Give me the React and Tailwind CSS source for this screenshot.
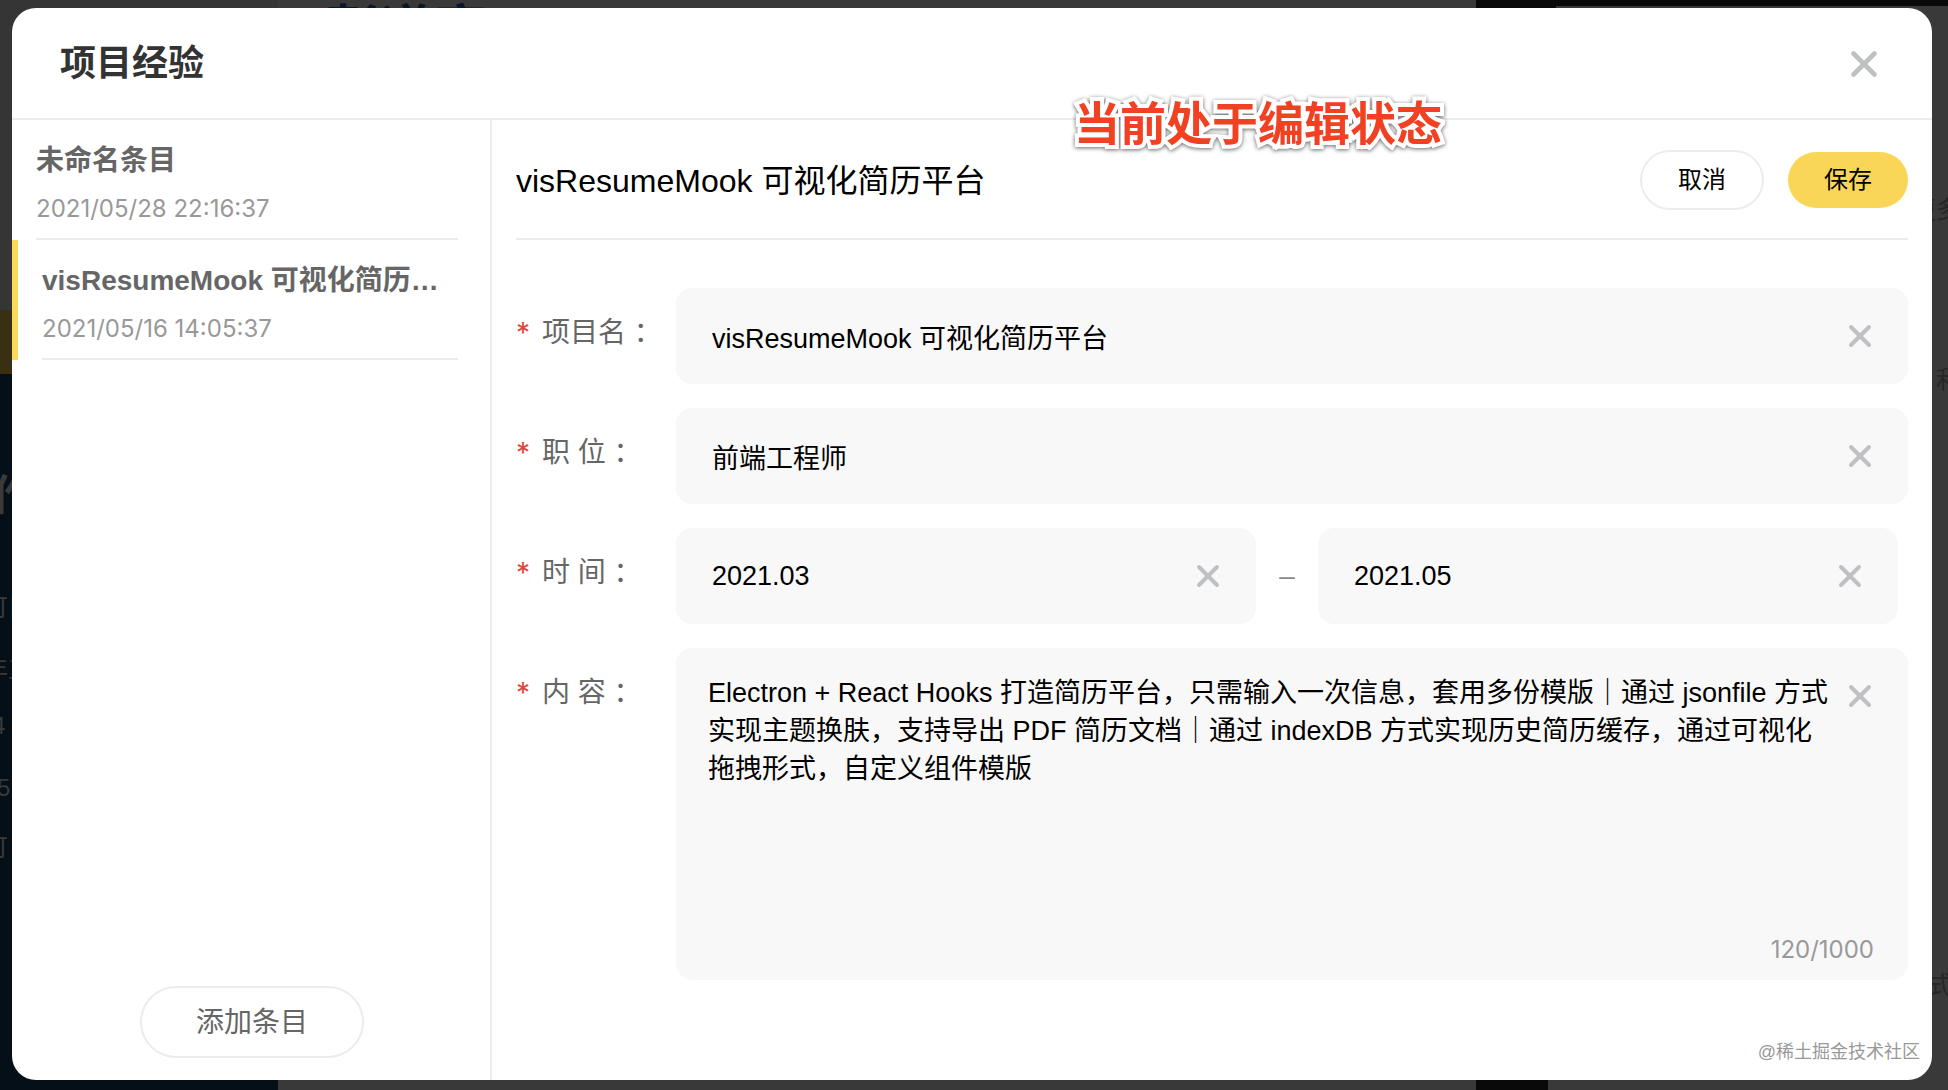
import React, { useState } from "react";

const FONT = "font-['Liberation_Sans','Noto_Sans_CJK_SC',sans-serif]";

function Cross({ className }) {
  return (
    <svg viewBox="0 0 24 24" className={className} fill="none" stroke="#bfc0c4" strokeLinecap="round" strokeWidth="4" aria-hidden="true">
      <path d="M3 3 21 21M21 3 3 21" />
    </svg>
  );
}

function Field({ id, value, label }) {
  const [text, setText] = useState(value);
  return (
    <div className="flex h-24 min-w-0 flex-1 items-center rounded-2xl bg-[#f8f8f8] px-9">
      <input id={id} aria-label={label} value={text} onChange={(e) => setText(e.target.value)} className="h-12 min-w-0 flex-1 bg-transparent text-[27px] text-black outline-none" />
      <button type="button" aria-label="清空" onClick={() => setText("")}>
        <Cross className="size-6" />
      </button>
    </div>
  );
}

function Row({ id, label, children }) {
  return (
    <div className="flex items-start">
      <label htmlFor={id} className="flex h-[90px] w-40 shrink-0 items-center gap-3 text-[28px] whitespace-pre text-[#666]">
        <span className="font-['Inter',sans-serif] text-[#e0483e]">*</span>
        <span>{label}</span>
      </label>
      {children}
    </div>
  );
}

function Entry({ title, time, active }) {
  return (
    <li className={active ? "border-l-6 border-[#fbd858]" : ""}>
      <button type="button" className={`ml-6 flex h-30 flex-col justify-center gap-2 border-b-2 border-[#ececec] pt-3 text-left ${active ? "w-[416px]" : "w-[422px]"}`}>
        <span className="block w-full truncate text-[28px] leading-10 font-bold text-[#666]">{title}</span>
        <span className="block font-['Inter',sans-serif] text-2xl leading-10 text-[#999]">{time}</span>
      </button>
    </li>
  );
}

const CONTENT =
  "Electron + React Hooks 打造简历平台，只需输入一次信息，套用多份模版｜通过 jsonfile 方式实现主题换肤，支持导出 PDF 简历文档｜通过 indexDB 方式实现历史简历缓存，通过可视化拖拽形式，自定义组件模版";

function Backdrop() {
  return (
    <div className="absolute inset-0 overflow-hidden bg-[#393939] text-2xl leading-10 whitespace-nowrap text-[#3a3a3a]" aria-hidden="true">
      <div className="absolute top-0 left-0 h-full w-[278px] bg-[#353535]" />
      <div className="absolute top-[310px] left-0 h-16 w-[278px] bg-[#393013]" />
      <div className="absolute top-[374px] bottom-0 left-0 w-[278px] bg-[#040f18]" />
      <div className="absolute top-0 right-0 left-[1476px] h-1.5 bg-[#090909]" />
      <div className="absolute top-0 left-[1476px] h-2 w-20 bg-[#090909]" />
      <div className="absolute bottom-0 left-[1476px] h-5 w-[72px] bg-[#090909]" />
      <div className="absolute top-0 left-[326px] text-[54px] leading-[62px] font-bold text-[#08182a]">彭道宽</div>
      <div className="absolute top-[468px] left-[-8px] text-[42px] leading-14 font-bold">作</div>
      <div className="absolute top-[588px] left-[-16px]">可目</div>
      <div className="absolute top-[650px] left-[-16px]">年工</div>
      <div className="absolute top-[706px] left-[-8px]">4</div>
      <div className="absolute top-[768px] left-[-3px]">5</div>
      <div className="absolute top-[828px] left-[-16px]">可</div>
      <div className="absolute top-[190px] left-[1912px] text-[#262626]">更多</div>
      <div className="absolute top-[360px] left-[1936px] text-[#262626]">利</div>
      <div className="absolute top-[965px] left-[1928px] text-[#262626]">式</div>
    </div>
  );
}

export default function App() {
  const [content, setContent] = useState(CONTENT);
  return (
    <div className={`relative flex min-h-screen pt-2 pr-4 pb-2.5 pl-3 ${FONT}`}>
      <Backdrop />
      <section role="dialog" aria-labelledby="dialog-title" className="relative flex flex-1 flex-col overflow-hidden rounded-3xl bg-white">
        <header className="flex h-28 shrink-0 items-center justify-between border-b-2 border-[#ececec] pt-0.5 pr-[54px] pl-12">
          <h1 id="dialog-title" className="text-4xl font-bold text-[#333]">项目经验</h1>
          <button type="button" aria-label="关闭">
            <Cross className="size-7" />
          </button>
        </header>
        <div className="flex flex-1">
          <aside className="flex w-[480px] shrink-0 flex-col border-r-2 border-[#ececec]">
            <ul className="flex-1">
              <Entry title="未命名条目" time="2021/05/28 22:16:37" />
              <Entry title="visResumeMook 可视化简历平台" time="2021/05/16 14:05:37" active />
            </ul>
            <button type="button" className="mb-[22px] ml-32 h-18 w-56 rounded-full border-2 border-[#ececec] pt-0.5 text-[28px] text-[#666]">添加条目</button>
          </aside>
          <main className="min-w-0 flex-1 px-6">
            <div className="flex h-30 items-center border-b-2 border-[#ececec] pt-0.5">
              <h2 className="flex-1 pt-0.5 text-[32px] text-black">visResumeMook 可视化简历平台</h2>
              <button type="button" className="mr-6 h-15 w-31 rounded-full border-2 border-[#ececec] text-2xl">取消</button>
              <button type="button" className="h-14 w-30 rounded-full bg-[#fad658] text-2xl">保存</button>
            </div>
            <form className="flex flex-col gap-6 pt-12">
              <Row id="name" label="项目名 ：">
                <Field id="name" value="visResumeMook 可视化简历平台" />
              </Row>
              <Row id="post" label="职 位 ：">
                <Field id="post" value="前端工程师" />
              </Row>
              <Row id="start" label="时 间 ：">
                <div className="flex flex-1 items-center pr-2.5">
                  <Field id="start" value="2021.03" />
                  <span className="w-[62px] text-center text-[28px] text-[#888]">–</span>
                  <Field id="end" label="结束时间" value="2021.05" />
                </div>
              </Row>
              <Row id="content" label="内 容 ：">
                <div className="flex min-w-0 flex-1 flex-col rounded-2xl bg-[#f8f8f8] px-8 pt-[26px] pb-2.5">
                  <div className="flex items-start">
                    <textarea id="content" value={content} onChange={(e) => setContent(e.target.value)} className="mr-4 h-64 min-w-0 flex-1 resize-none bg-transparent text-[27px] leading-[38px] text-black outline-none" />
                    <button type="button" aria-label="清空" className="mt-2.5 mr-1" onClick={() => setContent("")}>
                      <Cross className="size-6" />
                    </button>
                  </div>
                  <output className="self-end pr-0.5 font-['Inter',sans-serif] text-2xl leading-10 text-[#999]">120/1000</output>
                </div>
              </Row>
            </form>
          </main>
        </div>
      </section>
      <p className="absolute top-[92px] left-[1074px] text-[46px] leading-16 font-bold whitespace-nowrap text-[#f24022] [-webkit-text-stroke:8px_white] [paint-order:stroke_fill] [filter:drop-shadow(0_1px_2px_rgb(0_0_0/0.6))]">当前处于编辑状态</p>
      <p className="absolute right-7 bottom-[26px] text-lg leading-6 text-[#999]">@稀土掘金技术社区</p>
    </div>
  );
}
